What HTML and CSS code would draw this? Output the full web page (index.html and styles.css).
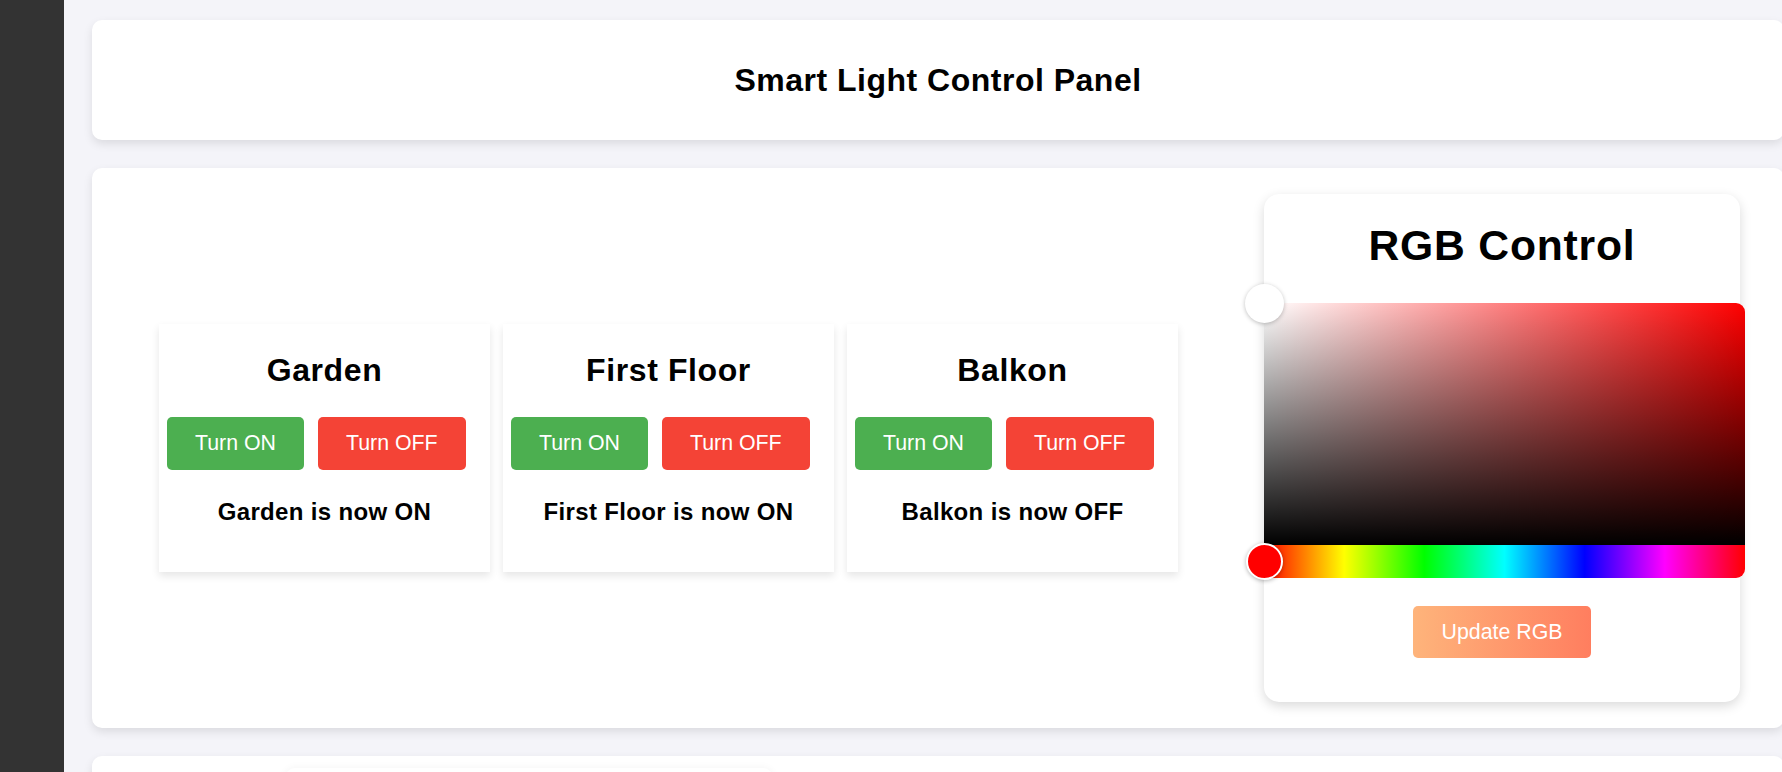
FILE: index.html
```html
<!DOCTYPE html>
<html lang="en">
<head>
<meta charset="utf-8">
<title>Smart Light Control Panel</title>
<link rel="stylesheet" href="styles.css">
</head>
<body>
<div class="app">
  <aside class="sidebar"></aside>
  <main class="content">
    <section class="card header-card">
      <h1 class="page-title">Smart Light Control Panel</h1>
    </section>

    <section class="card control-card">
      <div class="devices">
        <div class="device">
          <h2 class="device-name">Garden</h2>
          <div class="btn-row">
            <button class="btn btn-on">Turn ON</button>
            <button class="btn btn-off">Turn OFF</button>
          </div>
          <p class="status">Garden is now ON</p>
        </div>
        <div class="device">
          <h2 class="device-name">First Floor</h2>
          <div class="btn-row">
            <button class="btn btn-on">Turn ON</button>
            <button class="btn btn-off">Turn OFF</button>
          </div>
          <p class="status">First Floor is now ON</p>
        </div>
        <div class="device">
          <h2 class="device-name">Balkon</h2>
          <div class="btn-row">
            <button class="btn btn-on">Turn ON</button>
            <button class="btn btn-off">Turn OFF</button>
          </div>
          <p class="status">Balkon is now OFF</p>
        </div>
      </div>

      <div class="rgb-card">
        <h2 class="rgb-title">RGB Control</h2>
        <div class="picker">
          <div class="picker-surface">
            <div class="sat"></div>
            <div class="hue"></div>
          </div>
          <span class="handle handle-sat"></span>
          <span class="handle handle-hue"></span>
        </div>
        <button class="btn btn-update">Update RGB</button>
      </div>
    </section>

    <section class="card next-card">
      <div class="inner-card"></div>
    </section>
  </main>
</div>
</body>
</html>
```

FILE: styles.css
```css
html, body {
  margin: 0;
  padding: 0;
  height: 100%;
  overflow: hidden;
}

body {
  background: #f4f4f9;
  font-family: "Liberation Sans", Arial, sans-serif;
  color: #000;
}

.app {
  display: flex;
  min-height: 100vh;
}

.sidebar {
  flex: none;
  width: 64px;
  background: #333333;
}

.content {
  flex: none;
  width: 1692px;
  margin-left: 28px;
  padding-top: 20px;
  display: flex;
  flex-direction: column;
  gap: 28px;
}

.card {
  background: #fff;
  border-radius: 10px;
  box-shadow: 0 4px 10px rgba(0, 0, 0, 0.1);
}

.header-card {
  height: 120px;
  display: flex;
  align-items: center;
  justify-content: center;
}

.page-title {
  margin: 0;
  font-size: 32px;
  line-height: 37px;
  font-weight: bold;
  letter-spacing: 0.5px;
}

.control-card {
  height: 560px;
  box-sizing: border-box;
  display: flex;
  align-items: center;
  padding-left: 67px;
  gap: 86px;
}

.devices {
  display: flex;
  gap: 13px;
}

.device {
  width: 331px;
  height: 248px;
  box-sizing: border-box;
  padding-top: 28px;
  background: #fff;
  box-shadow: 0 4px 8px rgba(0, 0, 0, 0.1);
  text-align: center;
}

.device-name {
  margin: 0;
  font-size: 32px;
  line-height: 37px;
  font-weight: bold;
  letter-spacing: 0.6px;
}

.btn-row {
  display: flex;
  gap: 14px;
  padding-left: 8px;
  margin-top: 28px;
}

.btn {
  border: none;
  border-radius: 5px;
  color: #fff;
  font-family: inherit;
  font-size: 21.33px;
  line-height: 25px;
  padding: 14px 28px;
  cursor: pointer;
}

.btn-on {
  background: #4caf50;
}

.btn-off {
  background: #f44336;
}

.status {
  margin: 28px 0 0;
  font-size: 24px;
  line-height: 28px;
  font-weight: bold;
  letter-spacing: 0.35px;
}

.rgb-card {
  width: 476px;
  background: #fff;
  border-radius: 15px;
  box-shadow: 0 4px 12px rgba(0, 0, 0, 0.15);
  display: flex;
  flex-direction: column;
  align-items: center;
  padding-bottom: 44px;
}

.rgb-title {
  margin: 27px 0 33px;
  font-size: 42.67px;
  line-height: 49px;
  font-weight: bold;
  letter-spacing: 0.8px;
}

.picker {
  position: relative;
  width: 481px;
  align-self: flex-start;
}

.picker-surface {
  border-radius: 9px;
  overflow: hidden;
}

.sat {
  height: 242px;
  background:
    linear-gradient(to top, #000, rgba(0, 0, 0, 0)),
    linear-gradient(to right, #fff, #f00);
}

.hue {
  height: 33px;
  background: linear-gradient(to right,
    #f00 0%, #ff0 16.67%, #0f0 33.33%, #0ff 50%,
    #00f 66.67%, #f0f 83.33%, #f00 100%);
}

.handle {
  position: absolute;
  border-radius: 50%;
  box-sizing: border-box;
}

.handle-sat {
  width: 39px;
  height: 39px;
  left: -19.5px;
  top: -19.5px;
  background: #fff;
  box-shadow: 0 1px 4px rgba(0, 0, 0, 0.25);
}

.handle-hue {
  width: 37px;
  height: 37px;
  left: -18.5px;
  top: 240px;
  background: #f00;
  border: 2px solid #fff;
  box-shadow: 0 1px 4px rgba(0, 0, 0, 0.3);
}

.btn-update {
  margin-top: 28px;
  padding: 14px 29px;
  line-height: 24px;
  background: linear-gradient(to right, #feb47b, #ff7e5f);
}

.next-card {
  height: 200px;
  box-sizing: border-box;
  padding: 12px 0 0 193px;
}

.inner-card {
  width: 488px;
  height: 120px;
  border-radius: 10px;
  box-shadow: 0 0 8px rgba(0, 0, 0, 0.05);
}
```
